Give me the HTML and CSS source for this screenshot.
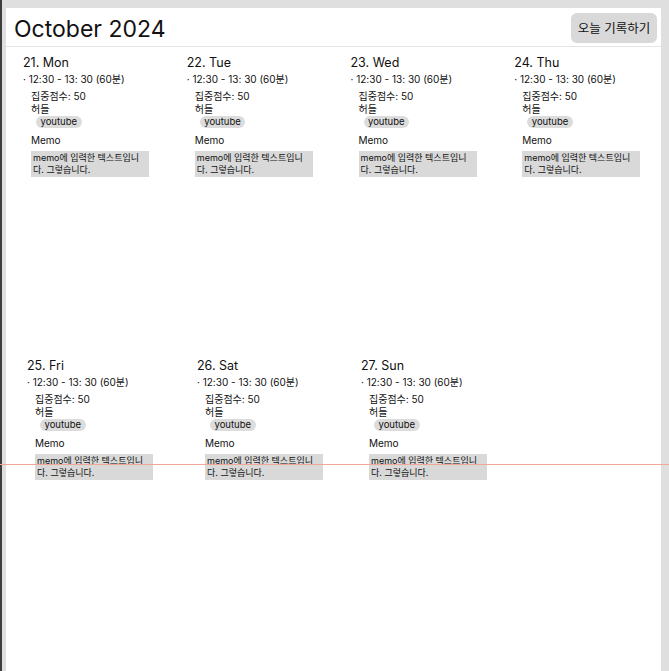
FILE: index.html
```html
<!DOCTYPE html>
<html lang="ko">
<head>
<meta charset="utf-8">
<title>October 2024</title>
<link rel="stylesheet" href="styles.css">
</head>
<body>
<div class="page">
  <header class="top">
    <h1 class="month">October 2024</h1>
    <button class="record">오늘 기록하기</button>
  </header>
  <section class="week">
    <div class="row row-a">
      <article class="card">
        <h2 class="day">21. Mon</h2>
        <div class="time">· 12:30 - 13: 30 (60분)</div>
        <div class="detail">
          <div class="line">집중점수: 50</div>
          <div class="line">허들</div>
          <span class="pill">youtube</span>
          <div class="memo-label">Memo</div>
          <div class="memo">memo에 입력한 텍스트입니다. 그렇습니다.</div>
        </div>
      </article>
      <article class="card">
        <h2 class="day">22. Tue</h2>
        <div class="time">· 12:30 - 13: 30 (60분)</div>
        <div class="detail">
          <div class="line">집중점수: 50</div>
          <div class="line">허들</div>
          <span class="pill">youtube</span>
          <div class="memo-label">Memo</div>
          <div class="memo">memo에 입력한 텍스트입니다. 그렇습니다.</div>
        </div>
      </article>
      <article class="card">
        <h2 class="day">23. Wed</h2>
        <div class="time">· 12:30 - 13: 30 (60분)</div>
        <div class="detail">
          <div class="line">집중점수: 50</div>
          <div class="line">허들</div>
          <span class="pill">youtube</span>
          <div class="memo-label">Memo</div>
          <div class="memo">memo에 입력한 텍스트입니다. 그렇습니다.</div>
        </div>
      </article>
      <article class="card">
        <h2 class="day">24. Thu</h2>
        <div class="time">· 12:30 - 13: 30 (60분)</div>
        <div class="detail">
          <div class="line">집중점수: 50</div>
          <div class="line">허들</div>
          <span class="pill">youtube</span>
          <div class="memo-label">Memo</div>
          <div class="memo">memo에 입력한 텍스트입니다. 그렇습니다.</div>
        </div>
      </article>
    </div>
    <div class="row row-b">
      <article class="card">
        <h2 class="day">25. Fri</h2>
        <div class="time">· 12:30 - 13: 30 (60분)</div>
        <div class="detail">
          <div class="line">집중점수: 50</div>
          <div class="line">허들</div>
          <span class="pill">youtube</span>
          <div class="memo-label">Memo</div>
          <div class="memo">memo에 입력한 텍스트입니다. 그렇습니다.</div>
        </div>
      </article>
      <article class="card">
        <h2 class="day">26. Sat</h2>
        <div class="time">· 12:30 - 13: 30 (60분)</div>
        <div class="detail">
          <div class="line">집중점수: 50</div>
          <div class="line">허들</div>
          <span class="pill">youtube</span>
          <div class="memo-label">Memo</div>
          <div class="memo">memo에 입력한 텍스트입니다. 그렇습니다.</div>
        </div>
      </article>
      <article class="card">
        <h2 class="day">27. Sun</h2>
        <div class="time">· 12:30 - 13: 30 (60분)</div>
        <div class="detail">
          <div class="line">집중점수: 50</div>
          <div class="line">허들</div>
          <span class="pill">youtube</span>
          <div class="memo-label">Memo</div>
          <div class="memo">memo에 입력한 텍스트입니다. 그렇습니다.</div>
        </div>
      </article>
    </div>
  </section>
</div>
<div class="guide"></div>
</body>
</html>
```

FILE: styles.css
```css
html, body {
  height: 100%;
}
body {
  margin: 0;
  background: #dfdfdf;
  border-left: 2px solid #3d3d3d;
  padding: 8px 8px 0 4px;
  box-sizing: border-box;
  font-family: Inter, "Noto Sans CJK KR", sans-serif;
  color: #111;
  overflow: hidden;
}
.page {
  background: #fff;
  min-height: 100%;
}
.top {
  display: flex;
  align-items: center;
  justify-content: space-between;
  height: 38px;
  padding: 0 4px 0 8px;
  border-bottom: 1px solid #e4e4e4;
}
.month {
  margin: 0;
  font-size: 23px;
  font-weight: 400;
  line-height: 28px;
  margin-top: 3px;
}
.record {
  height: 30px;
  width: 86px;
  border: none;
  border-radius: 6px;
  background: #d9d9d9;
  font-family: Inter, "Noto Sans CJK KR", sans-serif;
  font-size: 12.5px;
  color: #111;
  padding: 0;
  margin-top: 1px;
}
.row {
  display: grid;
  height: 303px;
}
.row-a {
  grid-template-columns: repeat(4, 1fr);
}
.row-b {
  grid-template-columns: 170px 164px 164px;
  padding-left: 4px;
}
.card {
  padding: 8px 0 0 17px;
}
.day {
  margin: 0;
  font-size: 12.5px;
  font-weight: 400;
  line-height: 16px;
}
.time {
  font-size: 10px;
  line-height: 16px;
}
.detail {
  padding-left: 8px;
  padding-top: 2.5px;
  font-size: 10px;
}
.line {
  font-size: 10px;
  line-height: 13px;
}
.pill {
  display: block;
  width: fit-content;
  margin: 0.5px 0 0 5px;
  height: 12px;
  line-height: 12px;
  padding: 0 4.5px;
  border-radius: 6px;
  background: #dcdcdc;
  font-size: 9.5px;
}
.memo-label {
  font-size: 10px;
  line-height: 13px;
  margin-top: 5.5px;
}
.memo {
  margin-top: 4.5px;
  width: 118px;
  box-sizing: border-box;
  padding: 1px 2px;
  background: #d9d9d9;
  font-size: 9px;
  line-height: 12px;
}
.guide {
  position: absolute;
  left: 0;
  right: 0;
  top: 464px;
  height: 1px;
  background: #f2a697;
}
```
